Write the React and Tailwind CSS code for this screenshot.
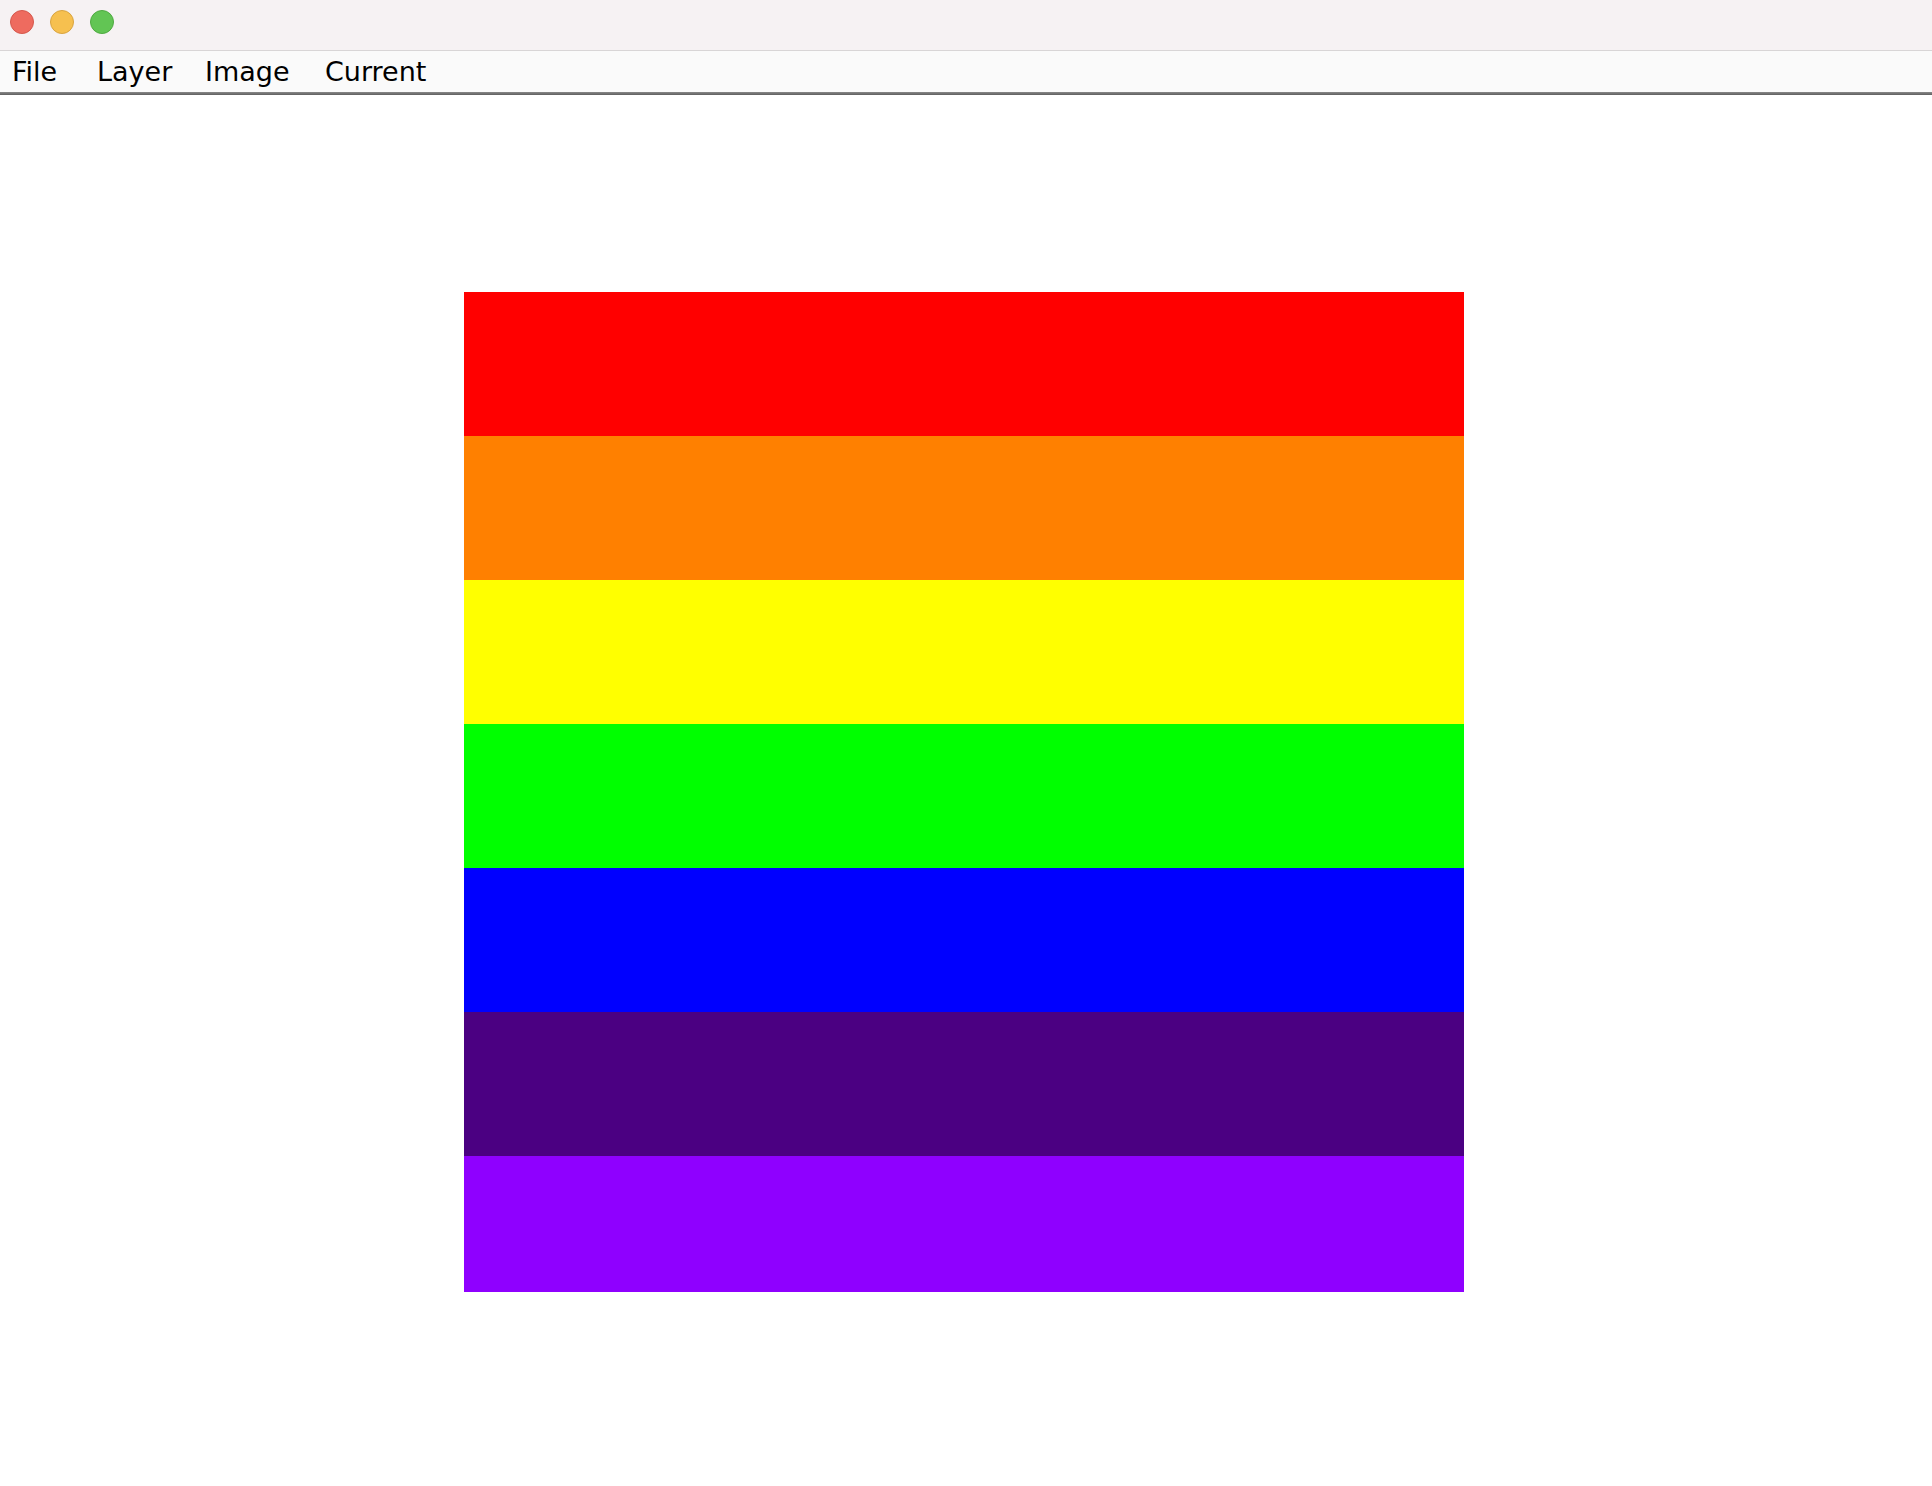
export default function App() {
  const stripes = [
    ["bg-[#ff0000]", "h-[144px]"],
    ["bg-[#ff8000]", "h-[144px]"],
    ["bg-[#ffff00]", "h-[144px]"],
    ["bg-[#00ff00]", "h-[144px]"],
    ["bg-[#0000ff]", "h-[144px]"],
    ["bg-[#4b0082]", "h-[144px]"],
    ["bg-[#8f00ff]", "h-[136px]"],
  ];
  return (
    <div className="w-[1932px] h-[1486px] flex flex-col bg-white overflow-hidden" style={{ fontFamily: '"DejaVu Sans", "Liberation Sans", sans-serif' }}>
      <div className="h-[50px] bg-[#f6f2f3] flex items-start pt-[10px] pl-[10px] gap-[16px] shrink-0">
        <div className="w-[24px] h-[24px] rounded-full bg-[#ee6b5f] border border-[#d5584c]" />
        <div className="w-[24px] h-[24px] rounded-full bg-[#f6c04f] border border-[#d9a440]" />
        <div className="w-[24px] h-[24px] rounded-full bg-[#62c554] border border-[#4faa41]" />
      </div>
      <div className="h-px bg-[#d8d5d6] shrink-0" />
      <div className="h-[41px] bg-[#fafafa] flex items-center pl-[12px] text-[27px] text-black leading-none shrink-0">
        <div className="w-[85px]">File</div>
        <div className="w-[108px]">Layer</div>
        <div className="w-[120px]">Image</div>
        <div>Current</div>
      </div>
      <div className="h-[3px] bg-gradient-to-b from-[#8a8a8a] to-[#5f5f5f] shrink-0" />
      <div className="flex-1 pt-[197px] pl-[464px]">
        <div className="w-[1000px] flex flex-col">
          {stripes.map(([c, h], i) => (
            <div key={i} className={`${c} ${h} w-full`} />
          ))}
        </div>
      </div>
    </div>
  );
}
